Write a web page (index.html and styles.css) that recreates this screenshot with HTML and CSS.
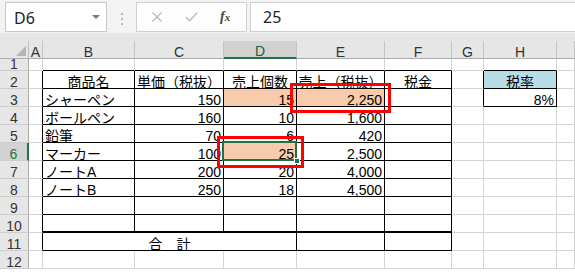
FILE: index.html
```html
<!DOCTYPE html>
<html lang="ja">
<head>
<meta charset="utf-8">
<title>Sheet</title>
<link rel="stylesheet" href="styles.css">
</head>
<body>
<div class="app">
  <div class="fbar">
    <div class="namebox"><span class="nb-text">D6</span><span class="nb-arrow"></span></div>
    <div class="grip"><i></i><i></i><i></i></div>
    <div class="fbtns">
      <svg class="ic-x" width="12" height="10" viewBox="0 0 12 10"><path d="M1.5 0.5 L10.5 9.5 M10.5 0.5 L1.5 9.5" stroke="#bcbcbc" stroke-width="1.3" fill="none"/></svg>
      <svg class="ic-ok" width="13" height="10" viewBox="0 0 13 10"><path d="M0.8 5.2 L4.5 8.8 L12.2 0.8" stroke="#bcbcbc" stroke-width="1.4" fill="none"/></svg>
      <span class="fx"><i>f</i><i class="fx-x">x</i></span>
    </div>
    <div class="finput">25</div>
  </div>
  <div class="band"></div>
  <div class="sheet">
    <div class="corner"><span class="tri"></span></div>
    <div class="ch">A</div><div class="ch">B</div><div class="ch">C</div><div class="ch sel">D</div><div class="ch">E</div><div class="ch">F</div><div class="ch">G</div><div class="ch">H</div><div class="ch"></div>

    <div class="rh">1</div>
    <div class="c"></div><div class="c tt"></div><div class="c tt"></div><div class="c tt"></div><div class="c tt"></div><div class="c tt"></div><div class="c"></div><div class="c tt"></div><div class="c"></div>

    <div class="rh">2</div>
    <div class="c tl"></div><div class="c tb ctr">商品名</div><div class="c tb ctr">単価（税抜）</div><div class="c tb ctr">売上個数</div><div class="c tb ctr">売上（税抜）</div><div class="c tb ctr">税金</div><div class="c tl"></div><div class="c tb ctr blue">税率</div><div class="c"></div>

    <div class="rh">3</div>
    <div class="c tl"></div><div class="c tb">シャーペン</div><div class="c tb num">150</div><div class="c tb num peach">15</div><div class="c tb num peach">2,250</div><div class="c tb"></div><div class="c tl"></div><div class="c tb num">8%</div><div class="c"></div>

    <div class="rh">4</div>
    <div class="c tl"></div><div class="c tb">ボールペン</div><div class="c tb num">160</div><div class="c tb num">10</div><div class="c tb num">1,600</div><div class="c tb"></div><div class="c"></div><div class="c"></div><div class="c"></div>

    <div class="rh">5</div>
    <div class="c tl"></div><div class="c tb">鉛筆</div><div class="c tb num">70</div><div class="c tb num">6</div><div class="c tb num">420</div><div class="c tb"></div><div class="c"></div><div class="c"></div><div class="c"></div>

    <div class="rh sel">6</div>
    <div class="c tl"></div><div class="c tb">マーカー</div><div class="c tb num">100</div><div class="c tb num peach active">25<span class="handle"></span></div><div class="c tb num">2,500</div><div class="c tb"></div><div class="c"></div><div class="c"></div><div class="c"></div>

    <div class="rh">7</div>
    <div class="c tl"></div><div class="c tb">ノートA</div><div class="c tb num">200</div><div class="c tb num">20</div><div class="c tb num">4,000</div><div class="c tb"></div><div class="c"></div><div class="c"></div><div class="c"></div>

    <div class="rh">8</div>
    <div class="c tl"></div><div class="c tb">ノートB</div><div class="c tb num">250</div><div class="c tb num">18</div><div class="c tb num">4,500</div><div class="c tb"></div><div class="c"></div><div class="c"></div><div class="c"></div>

    <div class="rh">9</div>
    <div class="c tl"></div><div class="c tb"></div><div class="c tb"></div><div class="c tb"></div><div class="c tb"></div><div class="c tb"></div><div class="c"></div><div class="c"></div><div class="c"></div>

    <div class="rh">10</div>
    <div class="c tl"></div><div class="c tb thick"></div><div class="c tb thick"></div><div class="c tb thick"></div><div class="c tb thick"></div><div class="c tb thick"></div><div class="c"></div><div class="c"></div><div class="c"></div>

    <div class="rh">11</div>
    <div class="c tl"></div><div class="c tb ctr span3">合　計</div><div class="c tb"></div><div class="c tb"></div><div class="c"></div><div class="c"></div><div class="c"></div>

    <div class="rh">12</div>
    <div class="c"></div><div class="c"></div><div class="c"></div><div class="c"></div><div class="c"></div><div class="c"></div><div class="c"></div><div class="c"></div><div class="c"></div>
  </div>
  <div class="mark mark-e3"></div>
  <div class="mark mark-d6"></div>
</div>
</body>
</html>
```

FILE: styles.css
```css
* { box-sizing: border-box; margin: 0; padding: 0; }
html, body { width: 575px; height: 273px; overflow: hidden; background: #fff; }
body { font-family: "Liberation Sans", "Noto Sans CJK JP", sans-serif; color: #000; }

.app { position: relative; width: 575px; height: 273px; }

/* formula bar */
.fbar {
  height: 33px;
  background: #f3f3f3;
  display: flex;
  align-items: flex-start;
  padding: 2px 0 0 5px;
}
.namebox {
  width: 102px; height: 30px;
  background: #fff;
  border: 1px solid #c6c6c6;
  display: flex; align-items: center; justify-content: space-between;
  padding: 0 6px 0 8px;
}
.nb-text { font-family: "Noto Sans", sans-serif; font-size: 16px; color: #222; line-height: 1; padding-top: 1px; }
.nb-arrow {
  width: 0; height: 0;
  border-left: 4px solid transparent;
  border-right: 4px solid transparent;
  border-top: 4px solid #7a7a7a;
}
.grip {
  width: 29px; height: 30px;
  display: flex; flex-direction: column; align-items: center;
  gap: 3px; padding-top: 11px;
}
.grip i { display: block; width: 2px; height: 2px; background: #b8b8b8; }
.fbtns {
  width: 111px; height: 30px;
  background: #fdfdfd;
  border: 1px solid #d0d0d0;
  display: flex; align-items: center;
  padding-left: 14px;
}
.ic-x { margin-right: 22px; }
.ic-ok { margin-right: 22px; }
.fx { font-family: "Liberation Serif", serif; font-size: 14px; color: #444; font-weight: bold; line-height: 1; }
.fx i { font-style: italic; }
.fx-x { font-size: 11px; }
.finput {
  flex: 1; height: 30px;
  margin-left: 3px;
  background: #fff;
  border: 1px solid #d0d0d0; border-right: none;
  padding-left: 12px;
  font-family: "Noto Sans", sans-serif; font-size: 16px; color: #222;
  line-height: 28px;
}
.band { height: 8px; background: #e6e6e6; }

/* sheet */
.sheet {
  display: grid;
  grid-template-columns: 29px 14px 92px 89px 73px 88px 67px 32px 73px 18px;
  grid-template-rows: 18px 12px repeat(11, 18px);
  font-size: 14px;
}
.corner {
  position: relative;
  background: #e6e6e6;
  border-right: 1px solid #bdbdbd;
  border-bottom: 1px solid #ababab;
}
.tri {
  position: absolute; right: 2px; bottom: 2px;
  width: 0; height: 0;
  border-left: 10px solid transparent;
  border-bottom: 10px solid #b4b4b4;
}
.ch {
  background: #e6e6e6;
  border-right: 1px solid #c4c4c4;
  border-bottom: 1px solid #ababab;
  color: #333;
  font-size: 14px;
  display: flex; align-items: flex-end; justify-content: center;
  line-height: 12px;
}
.ch.sel { background: #d2d2d2; color: #1d5e3a; border-bottom: 2px solid #217346; }
.rh {
  background: #e6e6e6;
  border-right: 1px solid #ababab;
  border-bottom: 1px solid #cdcdcd;
  color: #333;
  font-size: 14px;
  display: flex; align-items: flex-end; justify-content: center;
  line-height: 12px;
}
.rh.sel { background: #d2d2d2; color: #217346; border-right: 2px solid #217346; }

.c {
  position: relative;
  border-right: 1px solid #d4d4d4;
  border-bottom: 1px solid #d4d4d4;
  display: flex; align-items: flex-end;
  padding: 0 2px 0 2px;
  line-height: 12px;
  white-space: nowrap;
}
.tt { border-bottom-color: #000; }
.tl { border-right-color: #000; }
.tb { border-right-color: #000; border-bottom-color: #000; }
.thick { border-bottom-width: 2px; }
.num { justify-content: flex-end; }
.ctr { justify-content: center; }
.span3 { grid-column: span 3; }
.peach { background: #f8cbad; }
.blue { background: #b7dee8; }

.active::after {
  content: "";
  position: absolute;
  left: -2px; top: -2px; right: -1px; bottom: -1px;
  border: 2px solid #217346;
}
.handle {
  position: absolute; right: -4px; bottom: -4px;
  width: 6px; height: 6px;
  background: #217346;
  border: 1px solid #fff;
  z-index: 2;
}

/* annotation boxes */
.mark { position: absolute; border: 3px solid #ff0000; }
.mark-e3 { left: 290px; top: 83px; width: 101px; height: 30px; }
.mark-d6 { left: 217px; top: 136px; width: 87px; height: 32px; }
```
